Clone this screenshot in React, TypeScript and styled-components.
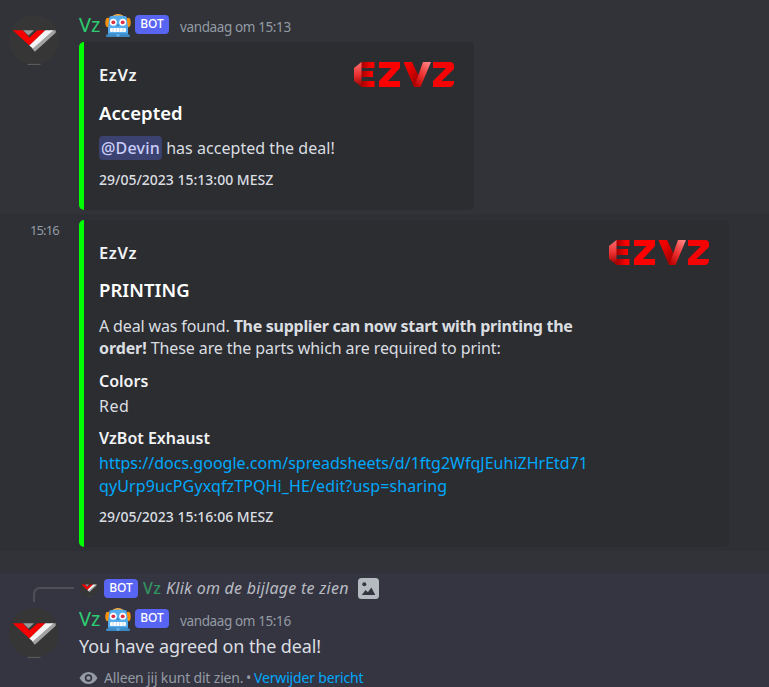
import React, { useId } from 'react';
import styled, { createGlobalStyle } from 'styled-components';

const GlobalStyle = createGlobalStyle`
  *, *::before, *::after { box-sizing: border-box; }
  html, body { margin: 0; background: #313338; overflow: hidden; }
  body { font-family: "Noto Sans", sans-serif; color: #dbdee1; }
  svg { display: block; flex: none; }
`;

const Chat = styled.main`
  display: flex;
  flex-direction: column;
  height: 687px;
  overflow: hidden;
`;

const Message = styled.article<{ $tone?: 'hover' | 'private' }>`
  display: grid;
  grid-template-columns: 79px 1fr;
  background: ${p => (p.$tone === 'hover' ? '#2e3035' : p.$tone === 'private' ? '#343541' : '#313338')};
  padding: ${p => (p.$tone === 'hover' ? '6px 0 4px' : p.$tone === 'private' ? '2px 0 0' : '12px 0 4px')};
  margin-bottom: ${p => (p.$tone === 'hover' ? '22px' : '0')};
  flex: ${p => (p.$tone === 'private' ? '1' : 'none')};
  align-content: start;
`;

const Gutter = styled.div<{ $top?: number }>`
  padding: ${p => p.$top ?? 0}px 0 0 9px;
`;

const GutterTime = styled.time`
  display: block;
  padding-left: 21px;
  font-size: 13px;
  line-height: 20px;
  letter-spacing: -0.9px;
  color: #949ba4;
`;

const Body = styled.div<{ $top?: number }>`
  min-width: 0;
  padding-top: ${p => p.$top ?? 0}px;
`;

const Header = styled.header<{ $tight?: boolean }>`
  display: flex;
  align-items: flex-start;
  height: ${p => (p.$tight ? 27 : 30)}px;
`;

const Author = styled.span`
  width: 26px;
  font-size: 20px;
  font-weight: 400;
  line-height: 26px;
  color: #2ecc71;
`;

const BotTag = styled.span<{ $inline?: boolean }>`
  display: flex;
  align-items: center;
  justify-content: center;
  width: 34px;
  height: 19px;
  margin: ${p => (p.$inline ? '0 5px 0 6px' : '3px 0 0 4px')};
  border-radius: 4px;
  background: #5865f2;
  color: #fff;
  font-size: 12px;
  font-weight: 500;
  line-height: 18px;
  padding-bottom: 1px;
`;

const SentAt = styled.time`
  margin-left: 11px;
  font-size: 13.5px;
  line-height: 30px;
  letter-spacing: -0.38px;
  color: #949ba4;
`;

const Embed = styled.section<{ $wide?: boolean }>`
  display: flex;
  justify-content: space-between;
  align-items: flex-start;
  width: ${p => (p.$wide ? 650 : 395)}px;
  height: ${p => (p.$wide ? 327 : 168)}px;
  padding: 19px 19px 0 15px;
  border-left: 5px solid #00ff00;
  border-radius: 5px;
  background: #2b2d31;
`;

const EmbedBody = styled.div`
  display: flex;
  flex-direction: column;
  padding-top: 4px;
  white-space: nowrap;
`;

const EmbedAuthor = styled.div`
  font-size: 16.5px;
  font-weight: 600;
  line-height: 20px;
  letter-spacing: 0.65px;
  color: #f2f3f5;
`;

const EmbedTitle = styled.h2<{ $low?: boolean }>`
  margin: ${p => (p.$low ? '17px 0 13px' : '16px 0 14px')};
  font-size: 18.5px;
  font-weight: 600;
  line-height: 22px;
  letter-spacing: 0.05px;
  color: #fff;
`;

const Line = styled.div<{ $track?: number }>`
  font-size: 16px;
  line-height: 22.4px;
  letter-spacing: ${p => p.$track ?? 0}px;
`;

const Strong = styled.strong<{ $track: number }>`
  font-weight: 700;
  letter-spacing: ${p => p.$track}px;
`;

const Mention = styled.span`
  display: inline-block;
  padding: 0 2px;
  height: 24px;
  line-height: 24px;
  margin: -1px 0;
  border-radius: 4px;
  background: #3c4270;
  color: #c9cdfb;
  font-weight: 500;
  letter-spacing: 0.2px;
`;

const FieldName = styled.div`
  margin: 11px 0 4px;
  font-size: 16px;
  font-weight: 600;
  line-height: 20px;
  color: #f2f3f5;
`;

const Link = styled.a<{ $track: number }>`
  display: block;
  font-size: 16px;
  line-height: 22.5px;
  letter-spacing: ${p => p.$track}px;
  color: #00a8fc;
`;

const Footer = styled.footer<{ $low?: boolean }>`
  margin-top: ${p => (p.$low ? 12 : 11)}px;
  font-size: 14px;
  font-weight: 500;
  line-height: 18px;
  color: #dbdee1;
`;

const Reply = styled.div`
  grid-column: 1 / -1;
  display: flex;
  align-items: center;
  height: 26px;
  padding-left: 33px;
`;

const Spine = styled.div`
  align-self: flex-end;
  width: 41px;
  height: 15px;
  margin: 0 6px -1px 0;
  border: solid #4e5058;
  border-width: 2px 0 0 2px;
  border-radius: 7px 0 0 0;
`;

const ReplyAuthor = styled.span`
  width: 23px;
  font-size: 16px;
  font-weight: 500;
  letter-spacing: 0.5px;
  line-height: 24px;
  color: #319461;
`;

const ReplyText = styled.em`
  width: 192px;
  font-size: 16px;
  line-height: 24px;
  letter-spacing: 0.26px;
  color: #b8bbc2;
`;

const Content = styled.p`
  margin: 0;
  font-size: 18px;
  line-height: 26px;
  letter-spacing: -0.12px;
  color: #dbdee1;
`;

const Notice = styled.div`
  display: flex;
  align-items: center;
  margin-top: 9px;
  font-size: 14px;
  line-height: 20px;
  letter-spacing: -0.17px;
  white-space: pre;
  color: #949ba4;
`;

const NoticeText = styled.span`
  margin-left: 6px;
  width: 142px;
`;

const Dismiss = styled.a`
  margin-left: 3px;
  letter-spacing: -0.18px;
  color: #00a8fc;
`;

const Avatar = ({ size }: { size: number }) => (
  <svg width={size} height={size} viewBox="0 0 50 50">
    <circle cx="25" cy="25" r="25" fill="#363636" />
    <path d="M18.500 49.400h13" stroke="#696969" strokeWidth=".8" />
    <path d="M14 15.300h11l-5.500 5.200z" fill="#999" />
    <path d="M3.700 15.300h10l6.700 7.200 8.200-7.200h7.800l-16 15.200z" fill="#f60000" />
    <path d="M46.700 15.300v2.400L25.800 36.800l-2.600-3.200 1.500-1.500L43 15.300z" fill="#a3a3a3" />
    <path d="M36.300 15.300h8L23.800 33.500l-3.500-3z" fill="#f4f4f4" />
  </svg>
);

const Robot = () => (
  <svg width="26" height="26" viewBox="0 -1 26 26">
    <path d="M5 5Q13-3 21 5z" fill="#ffac33" />
    <ellipse cx="2.800" cy="9.500" rx="2.500" ry="4.800" fill="#f4900c" />
    <ellipse cx="23.200" cy="9.500" rx="2.500" ry="4.800" fill="#f4900c" />
    <path d="M4.500 3.500Q13 1.500 21.500 3.500L23 15v8H3v-8z" fill="#55acee" />
    <path d="M3 20h20v2H3z" fill="#269" opacity=".35" />
    <path d="M1.200 21.500h23.600V24H1.200z" fill="#3b88c3" />
    <path d="M10.500 21.500h5L13 24z" fill="#67b8f4" />
    <circle cx="8.300" cy="9.300" r="3.500" fill="#fff" />
    <circle cx="17.700" cy="9.300" r="3.500" fill="#fff" />
    <circle cx="8.300" cy="9.300" r="1.900" fill="#dd2e44" />
    <circle cx="17.700" cy="9.300" r="1.900" fill="#dd2e44" />
    <path d="M12 13l1-2 1 2z" fill="#2a6797" />
    <rect x="5" y="15" width="16" height="4" rx="1.200" fill="#fff" />
    <path d="M8 15v4M11.300 15v4M14.600 15v4M18 15v4" stroke="#9fc6e4" strokeWidth=".6" />
  </svg>
);

const BrandMark = () => {
  const id = useId().replace(/[^a-z0-9]/gi, '');
  return (
    <svg width="101" height="27" viewBox="0 0 101 27">
      <defs>
        <linearGradient id={`${id}a`} x2="0" y2="1">
          <stop stopColor="#ff7070" /><stop offset=".55" stopColor="#e92c2c" /><stop offset="1" stopColor="#900000" />
        </linearGradient>
        <linearGradient id={`${id}b`}>
          <stop stopColor="#a00000" /><stop offset=".8" stopColor="#ff0000" />
        </linearGradient>
        <linearGradient id={`${id}c`} x2=".7" y2="1">
          <stop stopColor="#ff0000" /><stop offset=".35" stopColor="#e80000" /><stop offset="1" stopColor="#980000" />
        </linearGradient>
        <linearGradient id={`${id}d`} x1=".8" x2=".2" y2="1">
          <stop stopColor="#ff8080" /><stop offset=".5" stopColor="#ee3434" /><stop offset="1" stopColor="#bd0000" />
        </linearGradient>
      </defs>
      <path d="M7 1h13.500v6H7zM7 10h12v6H7zM7 20h13.500v6H7z" fill={`url(#${id}b)`} />
      <path d="M0 7l7.500-6v25L0 20z" fill={`url(#${id}a)`} />
      <path d="M25 1h21v6L34 20h12v6H25v-6L37.500 7H25z" fill="#ff0000" />
      <path d="M49.500 1H58l8 17-3 8h-3z" fill={`url(#${id}c)`} />
      <path d="M69 1h8L66.500 26H60z" fill={`url(#${id}d)`} />
      <path d="M79 1h17q4 0 4 4v3L87.500 20H100v2q-1 4-4 4H79v-6L92 7H79z" fill="#f40404" />
    </svg>
  );
};

const ImageIcon = () => (
  <svg width="21" height="21" viewBox="0 0 21 21">
    <rect width="21" height="21" rx="3.500" fill="#b5bac1" />
    <circle cx="6.300" cy="6.300" r="2" fill="#343541" />
    <path d="M3.800 17l3.800-5 2.300 2.200L13.300 9.500 17.300 17z" fill="#343541" />
  </svg>
);

const EyeIcon = () => (
  <svg width="19" height="14" viewBox="0 0 19 14">
    <path d="M.5 7Q4 1 9.500 1t9 6q-3.500 6-9 6T.5 7z" fill="#949ba4" />
    <circle cx="9.500" cy="7" r="3.700" fill="#343541" />
    <circle cx="9.500" cy="7" r="2.100" fill="#949ba4" />
  </svg>
);

const MessageHeader = ({ time, tight }: { time: string; tight?: boolean }) => (
  <Header $tight={tight}>
    <Author>Vz</Author>
    <Robot />
    <BotTag>BOT</BotTag>
    <SentAt>{time}</SentAt>
  </Header>
);

export default function App() {
  return (
    <>
      <GlobalStyle />
      <Chat>
        <Message>
          <Gutter $top={3}><Avatar size={50} /></Gutter>
          <Body>
            <MessageHeader time="vandaag om 15:13" />
            <Embed>
              <EmbedBody>
                <EmbedAuthor>EzVz</EmbedAuthor>
                <EmbedTitle $low>Accepted</EmbedTitle>
                <Line $track={0.04}><Mention>@Devin</Mention> has accepted the deal!</Line>
                <Footer $low>29/05/2023 15:13:00 MESZ</Footer>
              </EmbedBody>
              <BrandMark />
            </Embed>
          </Body>
        </Message>

        <Message $tone="hover">
          <Gutter><GutterTime>15:16</GutterTime></Gutter>
          <Embed $wide>
            <EmbedBody>
              <EmbedAuthor>EzVz</EmbedAuthor>
              <EmbedTitle>PRINTING</EmbedTitle>
              <Line $track={-0.14}>
                A deal was found. <Strong $track={-0.28}>The supplier can now start with printing the</Strong>
              </Line>
              <Line $track={-0.09}>
                <Strong $track={-0.1}>order!</Strong> These are the parts which are required to print:
              </Line>
              <FieldName>Colors</FieldName>
              <Line $track={0.5}>Red</Line>
              <FieldName>VzBot Exhaust</FieldName>
              <Link $track={0.005}>https://docs.google.com/spreadsheets/d/1ftg2WfqJEuhiZHrEtd71</Link>
              <Link $track={0.12}>qyUrp9ucPGyxqfzTPQHi_HE/edit?usp=sharing</Link>
              <Footer>29/05/2023 15:16:06 MESZ</Footer>
            </EmbedBody>
            <BrandMark />
          </Embed>
        </Message>

        <Message $tone="private">
          <Reply>
            <Spine />
            <Avatar size={18} />
            <BotTag $inline>BOT</BotTag>
            <ReplyAuthor>Vz</ReplyAuthor>
            <ReplyText>Klik om de bijlage te zien</ReplyText>
            <ImageIcon />
          </Reply>
          <Gutter $top={7}><Avatar size={50} /></Gutter>
          <Body $top={5}>
            <MessageHeader time="vandaag om 15:16" tight />
            <Content>You have agreed on the deal!</Content>
            <Notice>
              <EyeIcon />
              <NoticeText>Alleen jij kunt dit zien.</NoticeText>
              <span>•</span>
              <Dismiss>Verwijder bericht</Dismiss>
            </Notice>
          </Body>
        </Message>
      </Chat>
    </>
  );
}
